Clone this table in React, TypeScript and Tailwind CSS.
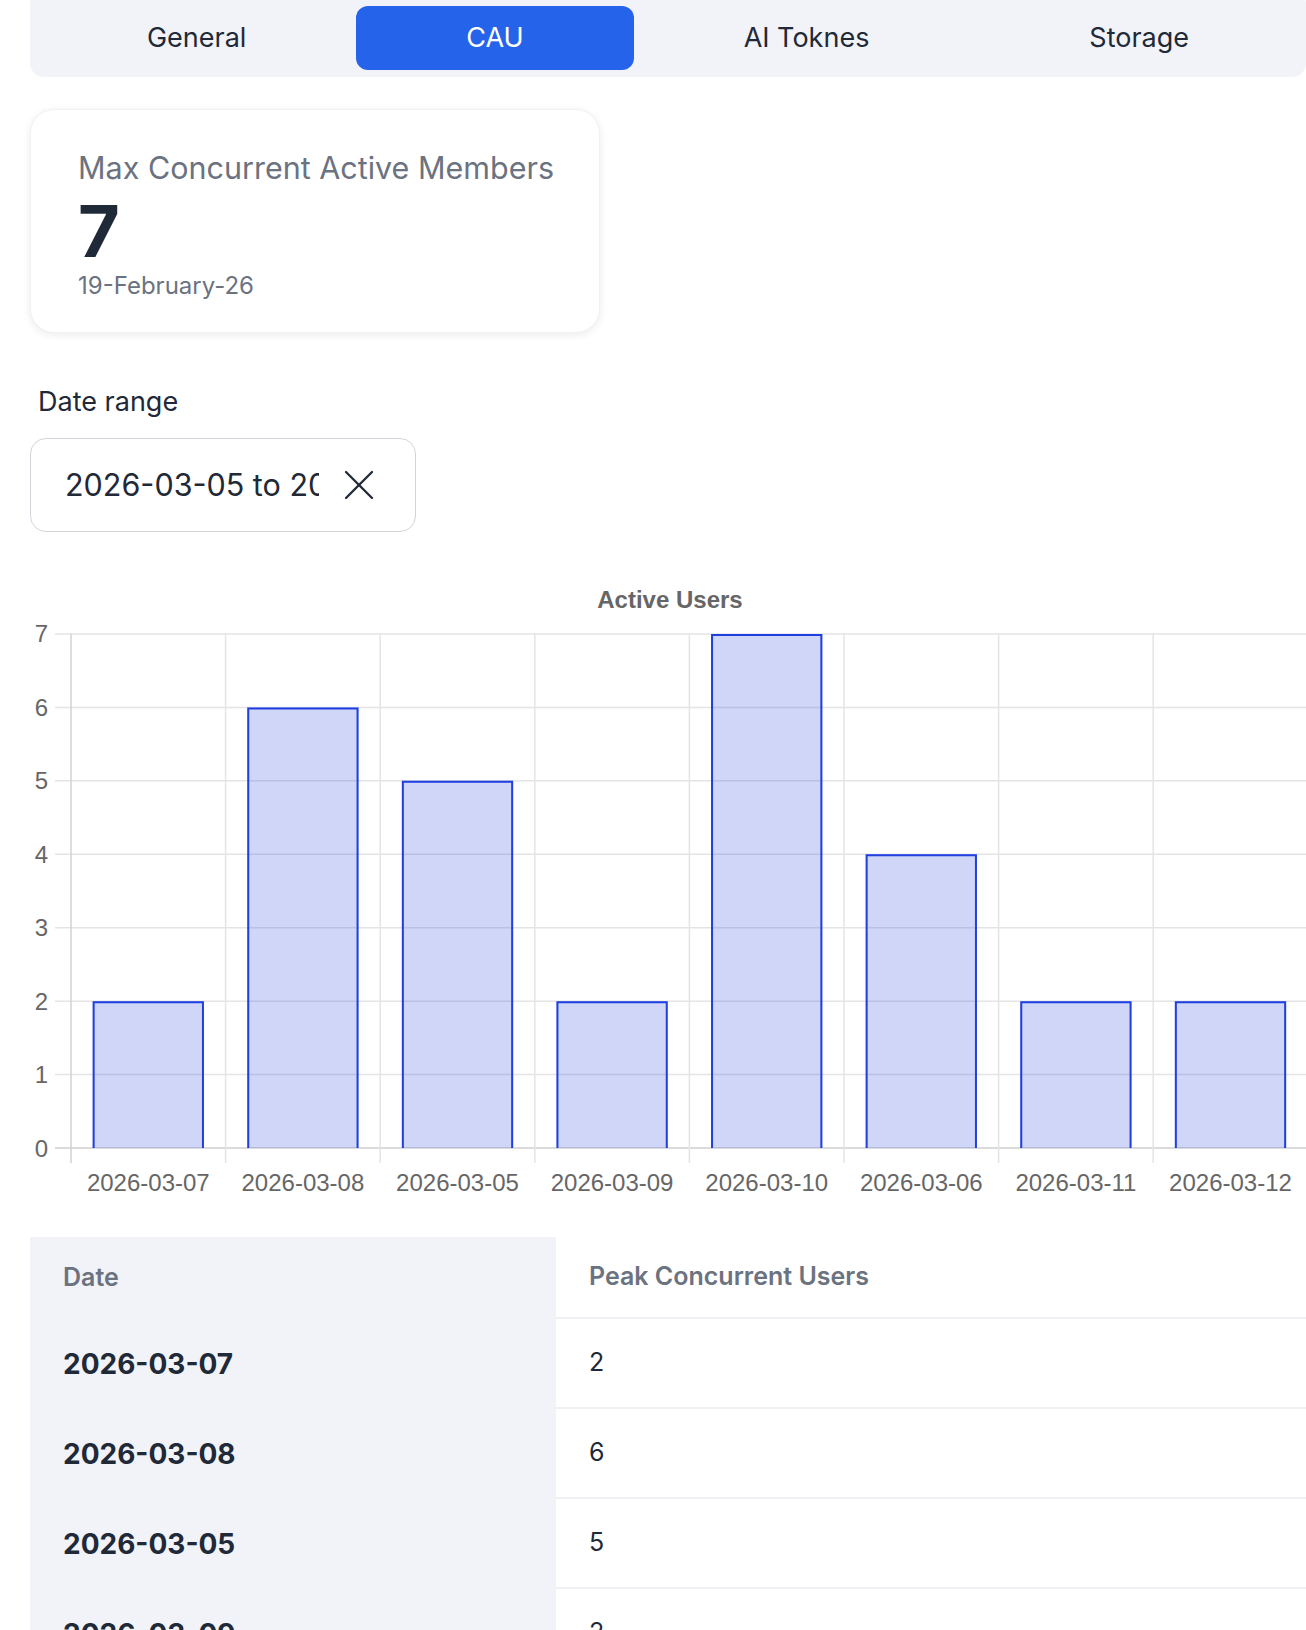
import { X } from 'lucide-react'

const tabs = ['General', 'CAU', 'AI Toknes', 'Storage']

const rows: [string, number][] = [
  ['2026-03-07', 2],
  ['2026-03-08', 6],
  ['2026-03-05', 5],
  ['2026-03-09', 2],
  ['2026-03-10', 7],
  ['2026-03-06', 4],
  ['2026-03-11', 2],
  ['2026-03-12', 2],
]

// chart geometry, in svg px
const plotLeft = 41
const cat = 154.6
const y0 = 579
const unit = 73.43
const barW = cat * 0.72
const yOf = (v: number) => y0 - v * unit

function ActiveUsersChart() {
  return (
    <svg width={1280} height={640} className="block font-['Liberation_Sans',Arial,sans-serif]">
      <text x={640} y={39} textAnchor="middle" fontSize={24} fontWeight={700} fill="#666666">
        Active Users
      </text>

      {/* horizontal grid + y labels */}
      {[0, 1, 2, 3, 4, 5, 6, 7].map((v) => (
        <g key={v}>
          <line
            x1={25}
            x2={1280}
            y1={yOf(v)}
            y2={yOf(v)}
            stroke={v === 0 ? '#cfcfcf' : '#e4e4e4'}
            strokeWidth={1.5}
          />
          <text x={18} y={yOf(v) + 8.5} textAnchor="end" fontSize={24} fill="#666666">
            {v}
          </text>
        </g>
      ))}

      {/* vertical grid */}
      {Array.from({ length: 9 }).map((_, i) => (
        <line
          key={i}
          x1={plotLeft + i * cat}
          x2={plotLeft + i * cat}
          y1={yOf(7)}
          y2={594}
          stroke={i === 0 ? '#d2d2d2' : '#e4e4e4'}
          strokeWidth={1.5}
        />
      ))}

      {/* bars */}
      {rows.map(([d, v], i) => {
        const x = plotLeft + i * cat + (cat - barW) / 2
        const top = yOf(v)
        return (
          <g key={d}>
            <rect x={x} y={top} width={barW} height={y0 - top} fill="rgba(29,62,216,0.21)" />
            <path
              d={`M${x + 1} ${y0} V${top + 1} H${x + barW - 1} V${y0}`}
              fill="none"
              stroke="#1f3fe0"
              strokeWidth={2}
            />
            <text x={plotLeft + i * cat + cat / 2} y={622} textAnchor="middle" fontSize={24} fill="#666666">
              {d}
            </text>
          </g>
        )
      })}
    </svg>
  )
}

export default function App() {
  return (
    <div className="w-[1306px] overflow-hidden bg-white pl-[30px] font-['Inter','Liberation_Sans',sans-serif] text-[#1f2937]">
      {/* Tabs */}
      <div className="-mt-[10px] flex rounded-[14px] bg-[#f1f3f8] px-[7px] pt-[16px] pb-[7px]">
        {tabs.map((t) => (
          <div
            key={t}
            className={
              t === 'CAU'
                ? 'flex h-[64px] flex-auto items-center justify-center rounded-[12px] bg-[#2563eb] text-[27px] text-white'
                : 'flex h-[64px] flex-auto items-center justify-center rounded-[12px] text-[27px] text-[#1f2937]'
            }
          >
            {t}
          </div>
        ))}
      </div>

      {/* Stat card */}
      <div className="mt-[32px] h-[224px] w-[570px] rounded-[24px] border border-[#f0f1f3] bg-white pt-[40px] pl-[47px] shadow-[0_2px_8px_rgba(0,0,0,0.08)]">
        <div className="text-[30.5px] leading-[36px] text-[#6b7280]">Max Concurrent Active Members</div>
        <div className="mt-[9px] text-[72px] font-bold leading-[72px] text-[#1f2937]">7</div>
        <div className="mt-[4px] text-[24px] leading-[30px] text-[#6b7280]">19-February-26</div>
      </div>

      {/* Date range */}
      <div className="mt-[53px] pl-[8px] text-[27px] leading-[32px] text-[#1f2937]">Date range</div>
      <div className="mt-[20px] flex h-[94px] w-[386px] items-center rounded-[16px] border-[1.5px] border-[#d1d5db] pl-[34px]">
        <span className="w-[254px] shrink-0 overflow-hidden whitespace-nowrap text-[30.5px] leading-[40px] text-[#1f2937]">
          2026-03-05 to 2026-03-12
        </span>
        <X className="ml-[14px] h-[52px] w-[52px] shrink-0 text-[#1f2937]" strokeWidth={1.05} />
      </div>

      {/* Chart */}
      <div className="mt-[37px]">
        <ActiveUsersChart />
      </div>

      {/* Table */}
      <div className="mt-[28px]">
        <div className="flex h-[82px]">
          <div className="flex w-[526px] items-center bg-[#f1f3f8] px-[33px] text-[25px] font-semibold text-[#6b7280]">
            Date
          </div>
          <div className="flex flex-1 items-center border-b-2 border-[#f0f1f5] px-[33px] text-[25px] font-semibold text-[#6b7280]">
            Peak Concurrent Users
          </div>
        </div>
        {rows.map(([d, v]) => (
          <div key={d} className="flex h-[90px]">
            <div className="flex w-[526px] items-center bg-[#f1f3f8] px-[33px] text-[28px] font-bold text-[#1f2937]">
              {d}
            </div>
            <div className="flex flex-1 items-center border-b-2 border-[#f0f1f5] px-[33px] text-[25px] text-[#1f2937]">
              {v}
            </div>
          </div>
        ))}
      </div>
    </div>
  )
}
